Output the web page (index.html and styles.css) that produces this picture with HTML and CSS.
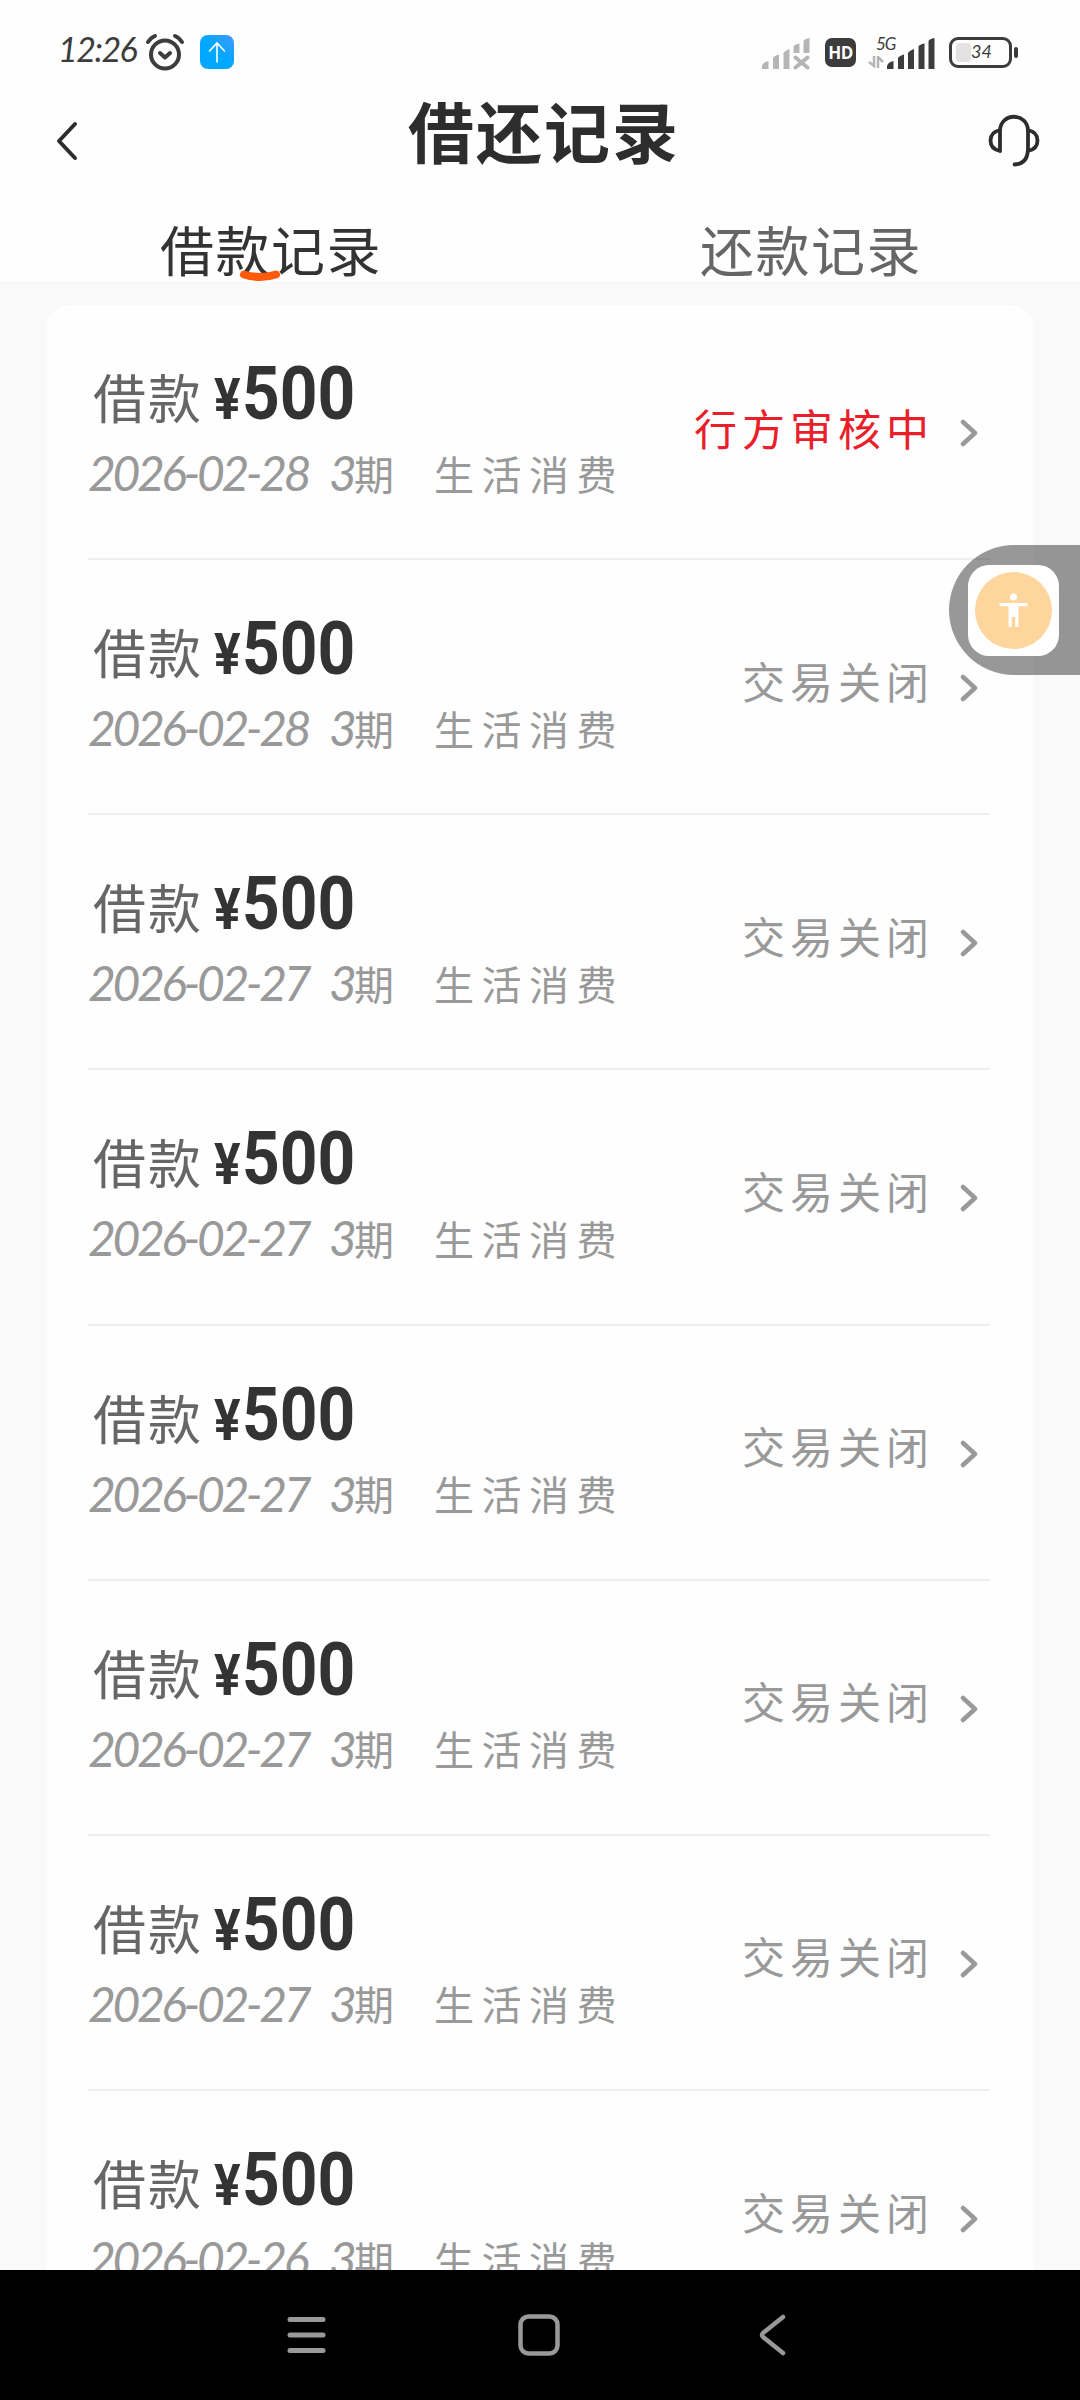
FILE: index.html
```
<!DOCTYPE html>
<html lang="zh-CN">
<head>
  <meta charset="UTF-8" />
  <meta name="viewport" content="width=device-width, initial-scale=1.0"/>
  <title>借还记录</title>
  <link rel="stylesheet" href="styles.css">
</head>
<body>
  <div class="status-bar">
    <span class="time">12:26</span>
    <svg class="alarm" width="40" height="38" viewBox="0 0 40 38" fill="none" stroke="#3c3c3c" stroke-width="4" stroke-linecap="round" stroke-linejoin="round">
      <circle cx="20" cy="21.500" r="14"/>
      <path d="M15 20l5 4.500 5-4.500M3 9q3-4.500 7-6M37 9q-3-4.500-7-6"/>
    </svg>
    <div class="upload">
      <svg width="34" height="34" viewBox="0 0 34 34" fill="none" stroke="#fff" stroke-width="1.600" stroke-linecap="round"><path d="M17 27V8M9.500 16L17 8l7.500 8"/></svg>
    </div>
    <div class="status-icons">
      <svg class="signal-off" width="48" height="32" viewBox="0 0 48 32" fill="#b5b5b5">
        <path d="M0 31V28q1-4 6.500-5v8zM11 31V20q1-2 6-3.500V31zM21.500 31V15q1-2 6-4V31zM31.500 15V8.500q1-2 6-3V15zM41.500 15V3q1-2 6-3V15z"/>
        <path d="M33.500 19.500l12 10M45.500 19.500l-12 10" stroke="#b5b5b5" stroke-width="4" stroke-linecap="round"/>
      </svg>
      <span class="hd">HD</span>
      <div class="network">
        <span>5G</span>
        <svg width="16" height="12" viewBox="0 0 16 12" fill="none" stroke="#b5b5b5" stroke-width="2.500"><path d="M1 6l5 4V0M15 6l-5-5v11"/></svg>
      </div>
      <svg class="signal" width="48" height="32" viewBox="0 0 48 32" fill="#3c3c3c">
        <path d="M0 31V28q1-4 6.500-5v8zM11 31V20q1-2 6-3.500V31zM21 31V15q1-2 6-4V31zM31.500 31V8.500q1-2 6-3V31zM41.500 31V3q1-2 6-3V31z"/>
      </svg>
      <div class="battery"><div class="battery-level"></div><span>34</span></div>
      <div class="battery-tip"></div>
    </div>
  </div>

  <div class="header">
    <svg width="22" height="40" viewBox="0 0 22 40" fill="none" stroke="#2d2d2d" stroke-width="4" stroke-linecap="round" stroke-linejoin="round"><path d="M19 3L3 20l16 17"/></svg>
    <h1>借还记录</h1>
    <svg width="52" height="54" viewBox="0 0 52 54" fill="none" stroke="#2d2d2d" stroke-width="3.800" stroke-linecap="round" stroke-linejoin="round">
      <path d="M12 37V17C12-2 40-2 40 17V34Q40 50 26.500 50.500M12 16Q2.500 18 2.500 26.500T12 37M40 16Q49.500 18 49.500 26.500T40 37"/>
    </svg>
  </div>

  <div class="tabs">
    <div class="tab active">借款记录
      <svg class="tab-mark" width="42" height="12" viewBox="0 0 42 12" fill="none" stroke="#ff5a0a" stroke-width="8" stroke-linecap="round"><path d="M5 4.500q16 5 32 0"/></svg>
    </div>
    <div class="tab">还款记录</div>
  </div>

  <div class="content">
    <div class="card">
      <div class="record">
        <div class="info">
          <div class="amount-line"><span class="type">借款</span><span class="yen">¥</span><span class="amount">500</span></div>
          <div class="detail"><span class="date">2026-02-28</span><span class="period">3</span><span class="unit">期</span><span class="purpose">生活消费</span></div>
        </div>
        <div class="state pending">行方审核中</div>
        <svg class="arrow" width="18" height="28" viewBox="0 0 18 28"><path d="M3 3l12 11L3 25"/></svg>
      </div>
      <div class="record">
        <div class="info">
          <div class="amount-line"><span class="type">借款</span><span class="yen">¥</span><span class="amount">500</span></div>
          <div class="detail"><span class="date">2026-02-28</span><span class="period">3</span><span class="unit">期</span><span class="purpose">生活消费</span></div>
        </div>
        <div class="state">交易关闭</div>
        <svg class="arrow" width="18" height="28" viewBox="0 0 18 28"><path d="M3 3l12 11L3 25"/></svg>
      </div>
      <div class="record">
        <div class="info">
          <div class="amount-line"><span class="type">借款</span><span class="yen">¥</span><span class="amount">500</span></div>
          <div class="detail"><span class="date">2026-02-27</span><span class="period">3</span><span class="unit">期</span><span class="purpose">生活消费</span></div>
        </div>
        <div class="state">交易关闭</div>
        <svg class="arrow" width="18" height="28" viewBox="0 0 18 28"><path d="M3 3l12 11L3 25"/></svg>
      </div>
      <div class="record">
        <div class="info">
          <div class="amount-line"><span class="type">借款</span><span class="yen">¥</span><span class="amount">500</span></div>
          <div class="detail"><span class="date">2026-02-27</span><span class="period">3</span><span class="unit">期</span><span class="purpose">生活消费</span></div>
        </div>
        <div class="state">交易关闭</div>
        <svg class="arrow" width="18" height="28" viewBox="0 0 18 28"><path d="M3 3l12 11L3 25"/></svg>
      </div>
      <div class="record">
        <div class="info">
          <div class="amount-line"><span class="type">借款</span><span class="yen">¥</span><span class="amount">500</span></div>
          <div class="detail"><span class="date">2026-02-27</span><span class="period">3</span><span class="unit">期</span><span class="purpose">生活消费</span></div>
        </div>
        <div class="state">交易关闭</div>
        <svg class="arrow" width="18" height="28" viewBox="0 0 18 28"><path d="M3 3l12 11L3 25"/></svg>
      </div>
      <div class="record">
        <div class="info">
          <div class="amount-line"><span class="type">借款</span><span class="yen">¥</span><span class="amount">500</span></div>
          <div class="detail"><span class="date">2026-02-27</span><span class="period">3</span><span class="unit">期</span><span class="purpose">生活消费</span></div>
        </div>
        <div class="state">交易关闭</div>
        <svg class="arrow" width="18" height="28" viewBox="0 0 18 28"><path d="M3 3l12 11L3 25"/></svg>
      </div>
      <div class="record">
        <div class="info">
          <div class="amount-line"><span class="type">借款</span><span class="yen">¥</span><span class="amount">500</span></div>
          <div class="detail"><span class="date">2026-02-27</span><span class="period">3</span><span class="unit">期</span><span class="purpose">生活消费</span></div>
        </div>
        <div class="state">交易关闭</div>
        <svg class="arrow" width="18" height="28" viewBox="0 0 18 28"><path d="M3 3l12 11L3 25"/></svg>
      </div>
      <div class="record">
        <div class="info">
          <div class="amount-line"><span class="type">借款</span><span class="yen">¥</span><span class="amount">500</span></div>
          <div class="detail"><span class="date">2026-02-26</span><span class="period">3</span><span class="unit">期</span><span class="purpose">生活消费</span></div>
        </div>
        <div class="state">交易关闭</div>
        <svg class="arrow" width="18" height="28" viewBox="0 0 18 28"><path d="M3 3l12 11L3 25"/></svg>
      </div>
    </div>
  </div>

  <div class="float-btn">
    <div class="float-icon">
      <svg width="77" height="77" viewBox="0 0 77 77">
        <circle cx="38.500" cy="38.500" r="38.500" fill="#fed59c"/>
        <circle cx="38.500" cy="25" r="3.500" fill="#fff"/>
        <path d="M24.500 31h28v3.200h-9V55h-3.200V45h-3.600v10h-3.200V34.200h-9z" fill="#fff"/>
      </svg>
    </div>
  </div>

  <div class="nav-bar">
    <svg width="40" height="44" viewBox="0 0 40 44" fill="none" stroke="#999" stroke-width="5" stroke-linecap="round"><path d="M4 6.500h33M4 22h33M4 37.500h33"/></svg>
    <svg class="home" width="44" height="44" viewBox="0 0 44 44" fill="none" stroke="#999" stroke-width="4.500"><rect x="3.500" y="3.500" width="37" height="37" rx="8"/></svg>
    <svg width="28" height="44" viewBox="0 0 28 44" fill="none" stroke="#999" stroke-width="4.500" stroke-linecap="round" stroke-linejoin="round"><path d="M25 4L5 20q-2 2 0 4l20 16"/></svg>
  </div>
</body>
</html>
```

FILE: styles.css
```
* {
  box-sizing: border-box;
}

body {
  margin: 0;
  width: 1080px;
  height: 2400px;
  overflow: hidden;
  display: flex;
  flex-direction: column;
  background: #fefefe;
  color: #333;
  font-family: Lato, "Noto Sans CJK SC", sans-serif;
}

svg {
  display: block;
  flex: none;
}

.status-bar {
  height: 88px;
  padding: 33px 62px 0 58px;
  display: flex;
  align-items: flex-start;
  color: #3c3c3c;
}

.time {
  width: 87px;
  font-size: 34px;
  font-style: italic;
  line-height: 32px;
  letter-spacing: -1.5px;
  white-space: nowrap;
}

.upload {
  width: 34px;
  height: 34px;
  margin: 2px 0 0 15px;
  border-radius: 8px;
  background: linear-gradient(to top right, #00a8ff 50%, #4298ff);
}

.status-icons {
  margin-left: auto;
  display: flex;
}

.signal-off,
.signal {
  margin-top: 5px;
}

.hd {
  width: 31px;
  height: 29px;
  margin: 5px 12px 0 15px;
  border-radius: 7px;
  background: #3c3c3c;
  color: #fff;
  font: bold 17px/29px "Open Sans", sans-serif;
  text-align: center;
  letter-spacing: -0.5px;
}

.network {
  width: 27px;
  margin-right: -8px;
  padding-top: 2px;
}

.network span {
  display: block;
  margin-left: 8px;
  height: 21px;
  font-size: 17px;
  font-style: italic;
  line-height: 17px;
  letter-spacing: -1px;
}

.battery {
  width: 63px;
  height: 31px;
  margin: 4px 2px 0 14px;
  padding: 3px 4px;
  display: flex;
  border: 3px solid #3c3c3c;
  border-radius: 9px;
}

.battery-level {
  width: 15px;
  border-radius: 3px;
  background: #e3e3e3;
}

.battery span {
  font-size: 18px;
  font-style: italic;
  line-height: 17px;
}

.battery-tip {
  width: 4px;
  height: 11px;
  margin-top: 14px;
  border-radius: 2px;
  background: #3c3c3c;
}

.header {
  height: 106px;
  padding: 0 40px 0 56px;
  display: flex;
  align-items: center;
  justify-content: space-between;
}

.header h1 {
  margin: -16px 0 0 22px;
  font-size: 66px;
  font-weight: 700;
  line-height: 1;
  color: #2d2d2d;
  letter-spacing: 2px;
}

.tabs {
  height: 87px;
  display: flex;
}

.tab {
  position: relative;
  flex: 1;
  padding: 30px 0 0 2px;
  text-align: center;
  font-size: 54px;
  line-height: 56px;
  letter-spacing: 1.5px;
  color: #666;
}

.tab.active {
  color: #333;
}

.tab-mark {
  position: absolute;
  left: 239px;
  bottom: -1px;
}

.content {
  flex: 1;
  min-height: 0;
  overflow: hidden;
  padding: 24px 46px 0;
  background: #f9f9f9;
}

.card {
  padding: 0 44px 0 42px;
  background: #fefefe;
  border-radius: 24px 24px 0 0;
}

.record {
  height: 255.15px;
  display: flex;
  align-items: center;
  border-bottom: 2px solid #efefef;
}

.info {
  flex: 1;
  margin-top: -1px;
  white-space: nowrap;
}

.amount-line {
  display: flex;
  align-items: baseline;
  height: 78px;
  line-height: 78px;
  font-family: Roboto, sans-serif;
}

.type {
  width: 126px;
  padding-left: 5px;
  font-family: "Noto Sans CJK SC", sans-serif;
  font-size: 53px;
  letter-spacing: 2px;
  color: #666;
}

.yen {
  width: 28px;
  font-size: 57px;
  font-weight: 700;
  transform: scaleX(0.87);
  transform-origin: left;
}

.amount {
  font-size: 74px;
  font-weight: 700;
  transform: scaleX(0.89);
  transform-origin: left;
}

.detail {
  display: flex;
  align-items: center;
  height: 74px;
  padding-top: 5px;
  font-size: 40px;
  color: #999;
}

.date,
.period {
  font-size: 48px;
  font-style: italic;
  letter-spacing: -3.4px;
}

.date {
  width: 241px;
}

.period {
  width: 25px;
}

.unit {
  width: 80px;
}

.purpose {
  letter-spacing: 7.5px;
}

.state {
  margin: -14px 26px 0 0;
  font-size: 43px;
  letter-spacing: 5px;
  color: #999;
}

.state.pending {
  margin-top: -9px;
  color: #e9202a;
}

.arrow {
  margin: 3px 12px 0 0;
  fill: none;
  stroke: #999;
  stroke-width: 4.5;
  stroke-linecap: round;
  stroke-linejoin: round;
}

.float-btn {
  position: absolute;
  top: 545px;
  right: 0;
  width: 131px;
  height: 130px;
  padding: 20px 0 0 19px;
  border-radius: 65px 0 0 65px;
  background: rgba(0, 0, 0, 0.4);
}

.float-icon {
  width: 91px;
  height: 91px;
  padding: 7px;
  border-radius: 21px;
  background: #fff;
}

.nav-bar {
  height: 130px;
  padding: 0 294px 0 286px;
  display: flex;
  align-items: center;
  justify-content: space-between;
  background: #000;
}

.home {
  margin-right: 7px;
}
```
